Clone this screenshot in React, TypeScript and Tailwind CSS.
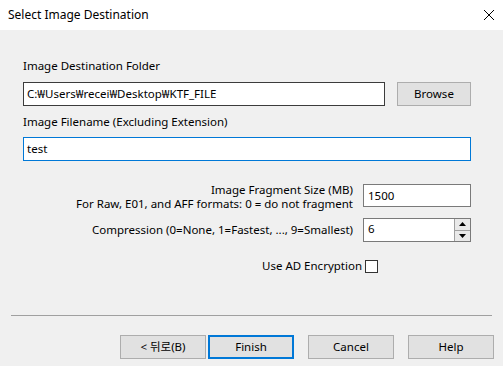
import React from "react";

const font = { fontFamily: '"Noto Sans", "Noto Sans CJK KR", sans-serif' };

function Btn({ children, focused }: { children: React.ReactNode; focused?: boolean }) {
  return (
    <div
      className={
        "w-[86px] h-[24px] flex items-center justify-center bg-[#e1e1e1] text-[11.5px] text-black " +
        (focused ? "border-2 border-[#0078d7]" : "border border-[#adadad]")
      }
    >
      {children}
    </div>
  );
}

export default function App() {
  return (
    <div className="w-[503px] h-[366px] bg-[#f0f0f0] flex flex-col overflow-hidden" style={font}>
      <div className="h-[30px] bg-white flex items-center justify-between pl-[8px] pr-[5px] shrink-0">
        <span className="text-[12px] text-black">Select Image Destination</span>
        <svg width="12" height="12" viewBox="0 0 12 12" className="mr-[3px]">
          <path d="M1 1 L11 11 M11 1 L1 11" stroke="#000" strokeWidth="1" />
        </svg>
      </div>
      <div className="flex flex-col pl-[23px] pr-[32px]">
        <div className="mt-[28px] h-[16px] leading-[16px] text-[11.5px] text-black">Image Destination Folder</div>
        <div className="mt-[8px] flex items-center h-[24px]">
          <div className="flex-1 h-[24px] bg-white border border-[#3c3c3c] flex items-center pl-[3px] text-[11.5px] text-black">
            C:₩Users₩recei₩Desktop₩KTF_FILE
          </div>
          <div className="ml-[12px] w-[74px] h-[24px] bg-[#e1e1e1] border border-[#adadad] flex items-center justify-center text-[11.5px] text-black">
            Browse
          </div>
        </div>
        <div className="mt-[8px] h-[16px] leading-[16px] text-[11.5px] text-black">Image Filename (Excluding Extension)</div>
        <div className="mt-[7px] h-[24px] bg-white border border-[#0078d7] flex items-center pl-[3px] text-[11.5px] text-black">
          test
        </div>
        <div className="mt-[23px] flex items-start justify-end h-[27px]">
          <div className="flex flex-col items-end text-[11.5px] leading-[14px] text-black -mt-[1px]">
            <span>Image Fragment Size (MB)</span>
            <span>For Raw, E01, and AFF formats: 0 = do not fragment</span>
          </div>
          <div className="ml-[10px] w-[108px] h-[23px] bg-white border border-[#7a7a7a] flex items-center pl-[4px] text-[11.5px] text-black">
            1500
          </div>
        </div>
        <div className="mt-[7px] flex items-center justify-end">
          <span className="text-[11.5px] text-black">Compression (0=None, 1=Fastest, ..., 9=Smallest)</span>
          <div className="ml-[10px] w-[108px] h-[24px] bg-white border border-[#7a7a7a] flex items-center justify-between pl-[4px] text-[11.5px] text-black">
            <span className="-mt-[3px]">6</span>
            <div className="flex flex-col h-full w-[16px] border-l border-[#a0a0a0]">
              <div className="flex-1 bg-[#e9e9e9] border-b border-[#a0a0a0] flex items-center justify-center">
                <svg width="7" height="4" viewBox="0 0 7 4"><path d="M3.5 0 L7 4 L0 4 Z" fill="#000" /></svg>
              </div>
              <div className="flex-1 bg-[#e9e9e9] flex items-center justify-center">
                <svg width="7" height="4" viewBox="0 0 7 4"><path d="M0 0 L7 0 L3.5 4 Z" fill="#000" /></svg>
              </div>
            </div>
          </div>
        </div>
        <div className="mt-[16px] flex items-center justify-end pr-[93px] h-[16px]">
          <span className="text-[11.5px] text-black">Use AD Encryption</span>
          <div className="ml-[3px] w-[13px] h-[13px] bg-white border border-[#333]"></div>
        </div>
      </div>
      <div className="mt-[41px] mx-[11px] h-[1px] bg-[#a0a0a0] shrink-0"></div>
      <div className="mt-[19px] flex pl-[120px]">
        <Btn>&lt; 뒤로(B)</Btn>
        <div className="ml-[2px]">
          <Btn focused>Finish</Btn>
        </div>
        <div className="ml-[14px]">
          <Btn>Cancel</Btn>
        </div>
        <div className="ml-[14px]">
          <Btn>Help</Btn>
        </div>
      </div>
    </div>
  );
}
